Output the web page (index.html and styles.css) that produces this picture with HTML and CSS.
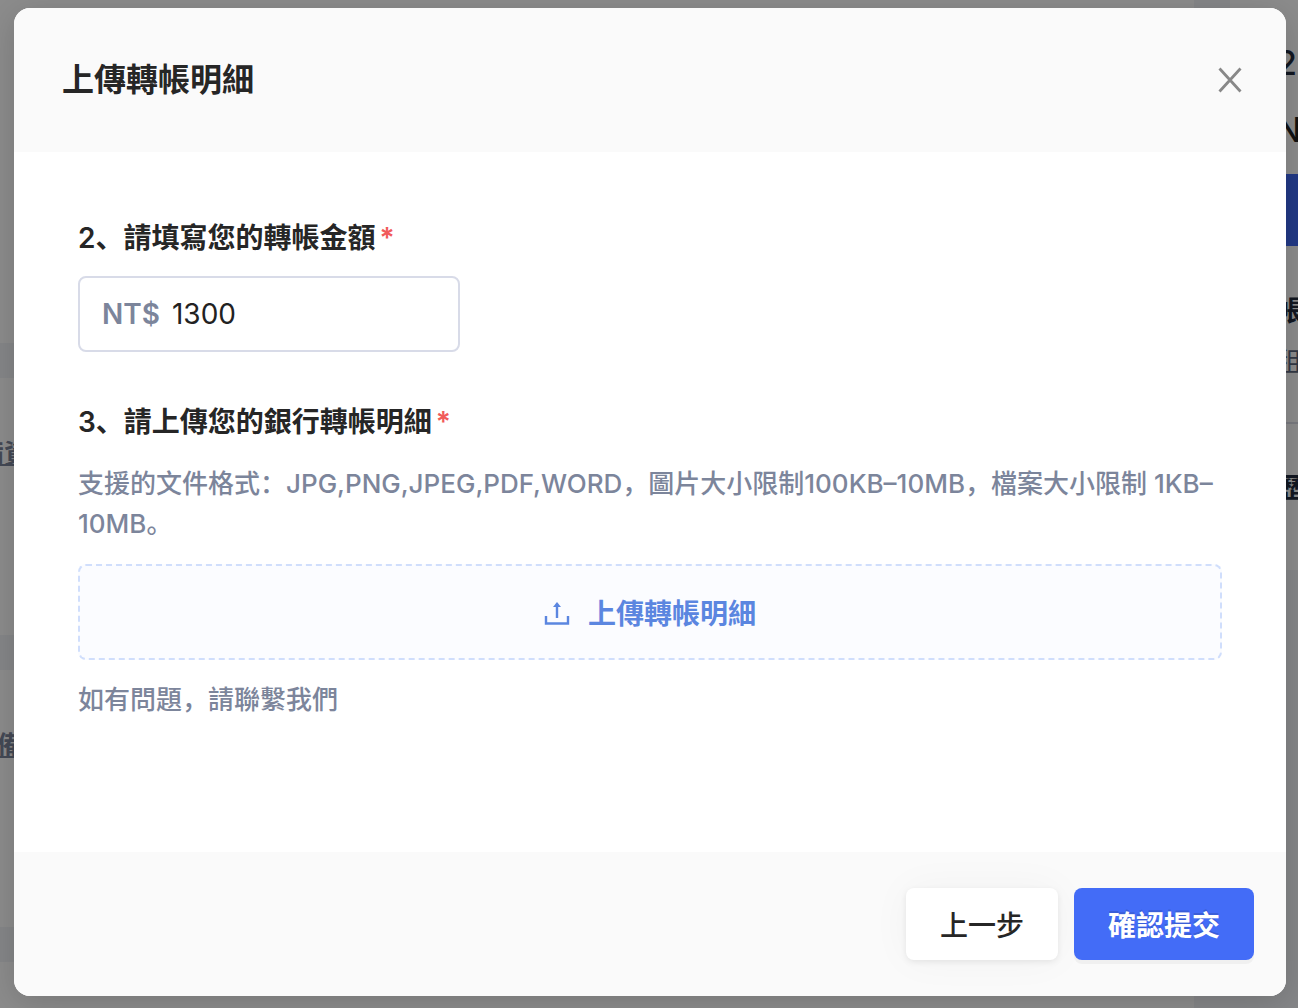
FILE: index.html
```
<!DOCTYPE html>
<html lang="zh-Hans">
<head>
    <meta charset="UTF-8">
    <meta name="viewport" content="width=device-width, initial-scale=1.0">
    <title>上傳轉帳明細</title>
    <link rel="stylesheet" href="styles.css">
</head>
<body>
    <div class="page" inert>
        <main class="cards">
            <section class="card card-first"></section>
            <section class="card"><a class="card-link" href="#">備資料</a></section>
            <section class="card"><a class="card-link card-link-second" href="#">備</a></section>
            <section class="card"></section>
        </main>
        <aside class="summary">
            <div class="summary-date">20</div>
            <div class="summary-price">NT$</div>
            <button class="summary-button" type="button"></button>
            <div class="summary-title">帳</div>
            <div class="summary-text">租</div>
            <hr>
            <div class="summary-title">歷</div>
        </aside>
    </div>

    <div class="overlay">
        <form class="modal" role="dialog" aria-labelledby="modalTitle">
            <header class="modal-header">
                <h1 id="modalTitle">上傳轉帳明細</h1>
                <button class="close" type="button" aria-label="關閉">
                    <svg width="24" height="26" viewBox="0 0 24 26" fill="none" stroke="#888" stroke-width="2.8">
                        <path d="M1.5 1.5L22.5 24.5M22.5 1.5L1.5 24.5"/>
                    </svg>
                </button>
            </header>
            <div class="modal-body">
                <label class="field-label" for="amount">2、請填寫您的轉帳金額<span class="required">*</span></label>
                <div class="amount-box">
                    <span class="prefix">NT$</span>
                    <input type="text" id="amount" name="amount" inputmode="numeric" value="1300">
                </div>
                <h2 class="field-label" id="uploadLabel">3、請上傳您的銀行轉帳明細<span class="required">*</span></h2>
                <p class="hint">支援的文件格式：JPG,PNG,JPEG,PDF,WORD，圖片大小限制100KB–10MB，檔案大小限制 1KB–10MB。</p>
                <button class="upload" type="button" aria-describedby="uploadLabel">
                    <svg width="26" height="26" viewBox="0 0 26 26" fill="none" stroke="currentColor" stroke-width="2.4">
                        <path d="M2 17v7.5h22V17M13 19V6"/>
                        <path d="M13 3L17 8H9z" fill="currentColor" stroke="none"/>
                    </svg>
                    上傳轉帳明細
                </button>
                <p class="hint">如有問題，請聯繫我們</p>
            </div>
            <footer class="modal-footer">
                <button class="btn" type="button">上一步</button>
                <button class="btn btn-primary" type="submit">確認提交</button>
            </footer>
        </form>
    </div>
</body>
</html>
```
FILE: styles.css
```
* {
    box-sizing: border-box;
}
body {
    margin: 0;
    min-height: 100vh;
    overflow: hidden;
    font-family: Inter, "Noto Sans CJK SC", sans-serif;
    background-color: #f3f4f7;
    color: #262626;
}
h1, h2, p {
    margin: 0;
}
button, input {
    font-family: inherit;
}

/* page behind the dialog */
.page {
    position: absolute;
    inset: 0;
    overflow: hidden;
    display: grid;
    grid-template-columns: 1fr 68px;
    gap: 36px;
}
.cards {
    display: flex;
    flex-direction: column;
    gap: 35px;
}
.card {
    height: 257px;
    flex-shrink: 0;
    padding-top: 58px;
    background: #fff;
}
.card-first {
    height: 343px;
}
.card-link {
    margin-left: -22px;
    font-size: 26px;
    font-weight: 600;
    line-height: 36px;
    color: #7c859b;
    text-decoration-thickness: 2px;
}
.card-link-second {
    margin-left: -3px;
}
.summary {
    height: 570px;
    padding: 40px 0 0 46px;
    overflow: hidden;
    white-space: nowrap;
    background: #fff;
    color: #222b3d;
}
.summary-date {
    font-size: 34px;
    font-weight: 500;
    line-height: 46px;
}
.summary-price {
    margin-top: 22px;
    font-size: 34px;
    font-weight: 500;
    line-height: 44px;
    color: #222;
}
.summary-button {
    display: block;
    width: 100%;
    height: 72px;
    margin: 22px 0 44px;
    border: none;
    background: #3e69f2;
}
.summary-title {
    font-size: 28px;
    font-weight: 600;
    line-height: 42px;
}
.summary-text {
    margin-top: 10px;
    font-size: 26px;
    line-height: 40px;
    color: #5c6680;
}
.summary hr {
    margin: 40px 0 43px;
    border: 0;
    border-top: 2px solid #dcdfe8;
}

/* dialog */
.overlay {
    position: relative;
    padding: 8px 12px 12px 14px;
    background: rgba(0, 0, 0, 0.45);
}
.modal {
    overflow: hidden;
    border-radius: 16px;
    background: #fff;
    box-shadow: 0 6px 32px rgba(0, 0, 0, 0.16);
}
.modal-header {
    display: flex;
    align-items: center;
    justify-content: space-between;
    height: 144px;
    padding: 0 44px 0 48px;
    background: #fafafa;
}
h1 {
    font-size: 32px;
    font-weight: 600;
    line-height: 48px;
}
.close {
    display: flex;
    padding: 0;
    border: none;
    background: none;
    cursor: pointer;
}
.modal-body {
    min-height: 700px;
    padding: 64px;
}
.field-label {
    display: block;
    font-size: 28px;
    font-weight: 600;
    line-height: 44px;
}
.required {
    margin-left: 4px;
    color: #f15b5b;
}
.amount-box {
    display: flex;
    align-items: center;
    gap: 12px;
    width: 382px;
    height: 76px;
    margin: 16px 0 48px;
    padding: 0 22px;
    border: 2px solid #d8dbe8;
    border-radius: 8px;
    font-size: 28px;
}
.prefix {
    font-weight: 600;
    color: #7c859b;
}
.amount-box input {
    flex: 1;
    min-width: 0;
    padding: 0;
    border: none;
    outline: none;
    background: none;
    font-size: 28px;
    color: #222;
}
.hint {
    margin-top: 20px;
    font-size: 26px;
    font-weight: 500;
    line-height: 40px;
    color: #7c859b;
}
.upload {
    display: flex;
    align-items: center;
    justify-content: center;
    gap: 18px;
    width: 100%;
    height: 96px;
    margin-top: 20px;
    border: 2px dashed #d0defc;
    border-radius: 8px;
    background: #fbfcff;
    font-size: 28px;
    font-weight: 600;
    color: #5b86e0;
    cursor: pointer;
}
.modal-footer {
    display: flex;
    justify-content: flex-end;
    gap: 16px;
    padding: 36px 32px;
    background: #fafafa;
}
.btn {
    height: 72px;
    padding: 0 34px;
    border: none;
    border-radius: 8px;
    background: #fff;
    box-shadow: 0 2px 6px rgba(0, 0, 0, 0.08), 0 0 40px rgba(0, 0, 0, 0.04);
    font-size: 28px;
    font-weight: 500;
    color: #262626;
    cursor: pointer;
}
.btn-primary {
    background: #436cf7;
    box-shadow: 0 4px 0 rgba(0, 0, 0, 0.04);
    font-weight: 600;
    color: #fff;
    text-shadow: 0 -2px 0 rgba(0, 0, 0, 0.12);
}
```
